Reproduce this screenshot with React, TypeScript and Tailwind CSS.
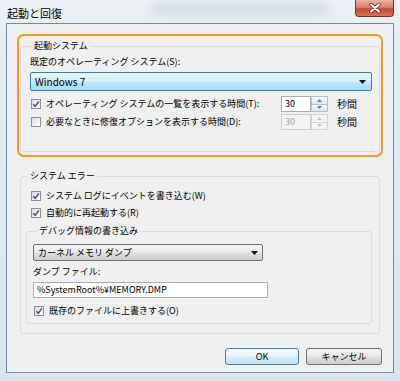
import React from 'react'

const font = "font-['Noto_Sans_CJK_JP','Noto_Sans',sans-serif]"

function Check({ checked, disabled }: { checked: boolean; disabled?: boolean }) {
    return (
        <span
            className={`w-[10px] h-[10px] shrink-0 border flex items-center justify-center ${disabled
                ? 'border-[#b8b8b8] bg-[#f4f4f4]'
                : 'border-[#8e8f8f] bg-[linear-gradient(135deg,#d8dbe0,#ffffff)]'
                }`}
        >
            {checked && (
                <svg width="8" height="8" viewBox="0 0 8 8">
                    <path d="M1.2 4.2 L3.2 6.3 L6.9 1.4" fill="none" stroke="#3b5690" strokeWidth="1.5" />
                </svg>
            )}
        </span>
    )
}

function Arrow() {
    return (
        <svg width="7" height="4" viewBox="0 0 7 4" className="shrink-0">
            <path d="M0 0 H7 L3.5 4 Z" fill="#111" />
        </svg>
    )
}

function Spinner({ disabled }: { disabled?: boolean }) {
    const half = disabled
        ? 'border-[#d2d6db] bg-[#f3f4f5]'
        : 'border-[#b3c0cc] bg-[linear-gradient(#f6f8fa,#dde5ec)]'
    const fill = disabled ? '#c3c8ce' : '#5f7fa3'
    return (
        <div className="flex flex-col w-[17px] h-[16px]">
            <div className={`flex-1 border flex items-center justify-center ${half}`}>
                <svg width="5" height="3" viewBox="0 0 5 3">
                    <path d="M0 3 H5 L2.5 0 Z" fill={fill} />
                </svg>
            </div>
            <div className={`flex-1 border border-t-0 flex items-center justify-center ${half}`}>
                <svg width="5" height="3" viewBox="0 0 5 3">
                    <path d="M0 0 H5 L2.5 3 Z" fill={fill} />
                </svg>
            </div>
        </div>
    )
}

function TimeRow({ label, checked, disabled }: { label: string; checked: boolean; disabled?: boolean }) {
    return (
        <div className="flex items-center h-[16px]">
            <div className="w-[251px] flex items-center gap-[4px] pl-[1px]">
                <Check checked={checked} />
                <span className="pl-[1px]">{label}</span>
            </div>
            <div
                className={`w-[30px] h-[16px] border flex items-center pl-[3px] ${disabled
                    ? 'border-[#c9cdd2] bg-[#f4f4f4] text-[#a3a3a3]'
                    : 'border-[#abadb3] bg-white'
                    }`}
            >
                30
            </div>
            <Spinner disabled={disabled} />
            <span className="ml-[9px] text-[10px]">秒間</span>
        </div>
    )
}

function CheckRow({ label }: { label: string }) {
    return (
        <div className="flex items-center h-[16px] gap-[4px] pl-[1px]">
            <Check checked />
            <span className="pl-[1px]">{label}</span>
        </div>
    )
}

export default function App() {
    return (
        <div
            className={`w-[400px] h-[381px] flex flex-col overflow-hidden text-[9px] leading-[12px] text-black ${font} bg-[linear-gradient(180deg,#eef2f6_0%,#e6edf3_8%,#d9e5ee_100%)]`}
        >
            {/* Title bar */}
            <div className="h-[23px] flex items-start justify-between relative">
                <div className="absolute left-[150px] top-[3px] w-[180px] h-[12px] rounded-full bg-[#c5ceda] blur-[5px] opacity-60" />
                <span className="relative pl-[7px] pt-[7px] text-[11px] leading-[13px]">起動と回復</span>
                <div className="relative mr-[6px] w-[39px] h-[17px] rounded-b-[4px] border border-t-0 border-[#7c3427] bg-[linear-gradient(180deg,#eab2a4_0%,#d9836f_45%,#c24a34_55%,#d9735a_100%)] flex items-center justify-center">
                    <svg width="12" height="10" viewBox="0 0 12 10">
                        <path d="M2 1.5 L10 8.5 M10 1.5 L2 8.5" stroke="#5b2218" strokeWidth="3.4" strokeLinecap="round" />
                        <path d="M2 1.5 L10 8.5 M10 1.5 L2 8.5" stroke="#ffffff" strokeWidth="2" strokeLinecap="round" />
                    </svg>
                </div>
            </div>

            {/* Client area */}
            <div className="flex-1 mx-[6px] mb-[8px] border border-[#6f8da9] bg-[#f0f0f0] flex flex-col">
                {/* Highlighted startup group */}
                <div className="mt-[10px] ml-[10px] w-[366px] h-[123px] border-2 border-[#f09a2a] rounded-[7px] pt-[4px] px-[1px]">
                    <fieldset className="border border-[#d8dde2] rounded-[3px] pl-[9px] pr-[7px] pb-[21px]">
                        <legend className="ml-[2px] px-[2px]">起動システム</legend>
                        <div className="mt-[4px]">既定のオペレーティング システム(S):</div>
                        <div className="mt-[4px] h-[19px] border border-[#3c7fb1] rounded-[2px] bg-[linear-gradient(180deg,#eaf6fd_0%,#d9f0fc_45%,#bee6fd_55%,#a7d9f5_100%)] flex items-center justify-between pl-[4px] pr-[5px] text-[10px]">
                            <span>Windows 7</span>
                            <Arrow />
                        </div>
                        <div className="mt-[5px]">
                            <TimeRow label="オペレーティング システムの一覧を表示する時間(T):" checked />
                        </div>
                        <div className="mt-[2px]">
                            <TimeRow label="必要なときに修復オプションを表示する時間(D):" checked={false} disabled />
                        </div>
                    </fieldset>
                </div>

                {/* System error group */}
                <fieldset className="mt-[13px] ml-[13px] w-[360px] border border-[#d8dde2] rounded-[3px] pl-[5px] pr-[7px] pb-[9px]">
                    <legend className="ml-[2px] px-[2px]">システム エラー</legend>
                    <div className="pl-[4px] mt-[6px]">
                        <CheckRow label="システム ログにイベントを書き込む(W)" />
                    </div>
                    <div className="pl-[4px] mt-[1px]">
                        <CheckRow label="自動的に再起動する(R)" />
                    </div>

                    <fieldset className="mt-[4px] border border-[#d8dde2] rounded-[3px] pl-[6px] pb-[4px]">
                        <legend className="ml-[4px] px-[2px]">デバッグ情報の書き込み</legend>
                        <div className="mt-[7px] w-[230px] h-[17px] border border-[#707070] rounded-[2px] bg-[linear-gradient(180deg,#f2f2f2_0%,#ebebeb_45%,#dddddd_55%,#cfcfcf_100%)] flex items-center justify-between pl-[4px] pr-[4px]">
                            <span>カーネル メモリ ダンプ</span>
                            <Arrow />
                        </div>
                        <div className="mt-[5px]">ダンプ ファイル:</div>
                        <div className="mt-[4px] w-[235px] h-[16px] border border-[#abadb3] bg-white flex items-center pl-[3px]">
                            %SystemRoot%¥MEMORY.DMP
                        </div>
                        <div className="mt-[5px]">
                            <CheckRow label="既存のファイルに上書きする(O)" />
                        </div>
                    </fieldset>
                </fieldset>

                {/* Buttons */}
                <div className="mt-[14px] flex justify-end gap-[7px] pr-[11px]">
                    <button className="w-[74px] h-[17px] border border-[#3c7fb1] rounded-[3px] bg-[linear-gradient(180deg,#f2f9fd_0%,#eaf5fc_45%,#d4ebf8_55%,#c4e3f5_100%)] text-[9px] leading-[12px]">
                        OK
                    </button>
                    <button className="w-[76px] h-[17px] border border-[#707070] rounded-[3px] bg-[linear-gradient(180deg,#f2f2f2_0%,#ebebeb_45%,#dddddd_55%,#cfcfcf_100%)] text-[9px] leading-[12px]">
                        キャンセル
                    </button>
                </div>
            </div>
        </div>
    )
}
